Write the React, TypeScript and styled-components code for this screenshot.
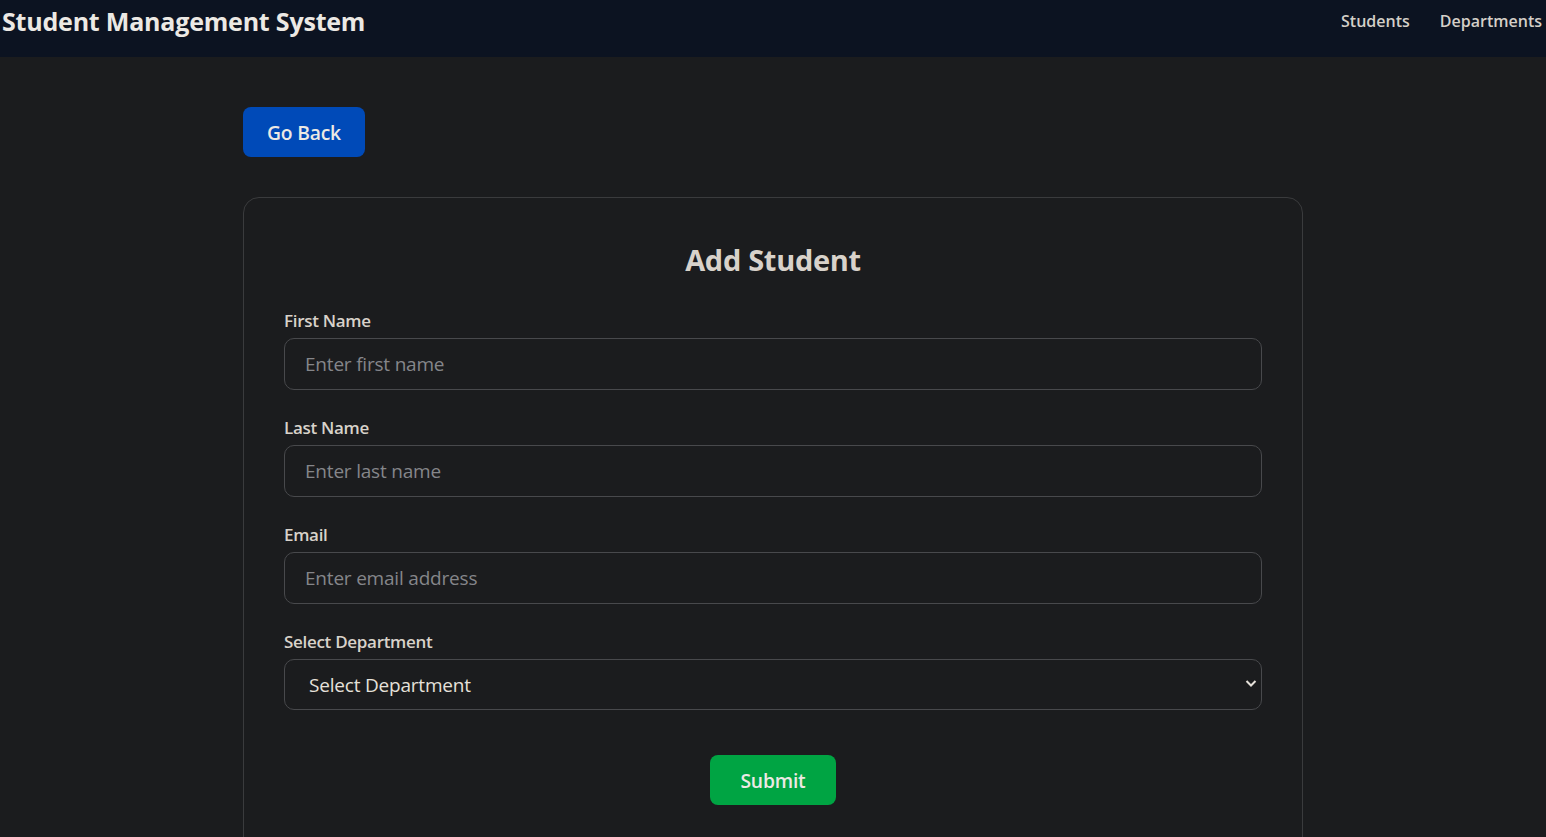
import React from "react";
import styled, { createGlobalStyle } from "styled-components";

const Global = createGlobalStyle`
  * { box-sizing: border-box; }
  html, body { margin: 0; padding: 0; background: #1b1c1e; }
  body { font-family: "Open Sans", "Noto Sans", sans-serif; color: #e6e1da; }
`;

const Header = styled.header`
  height: 57px;
  background: #0c1321;
  display: flex;
  align-items: flex-start;
  justify-content: space-between;
  padding: 3px 4px 0 2px;
`;

const Brand = styled.div`
  font-size: 25px;
  font-weight: 700;
  color: #ece9e4;
  line-height: 36px;
  letter-spacing: -0.2px;
`;

const Nav = styled.nav`
  display: flex;
  gap: 30px;
  padding-top: 3px;
`;

const NavLink = styled.a`
  font-size: 16px;
  font-weight: 600;
  color: #d4cfc8;
  line-height: 30px;
  text-decoration: none;
`;

const Main = styled.main`
  width: 1060px;
  margin: 0 auto;
  padding-top: 50px;
`;

const Button = styled.button<{ $variant: "blue" | "green" }>`
  height: 50px;
  padding: 0 ${(p) => (p.$variant === "blue" ? 24 : 30)}px;
  border: none;
  border-radius: 8px;
  background: ${(p) => (p.$variant === "blue" ? "#004ab8" : "#00a443")};
  color: #ece9e4;
  font-family: inherit;
  font-size: 19.3px;
  font-weight: 600;
  letter-spacing: -0.2px;
  cursor: pointer;
`;

const Card = styled.section`
  margin-top: 40px;
  border: 1px solid #3a3b3d;
  border-radius: 16px;
  padding: 40px 40px 40px;
  height: 680px;
`;

const Title = styled.h2`
  margin: 0 0 28px;
  text-align: center;
  font-size: 29px;
  font-weight: 700;
  line-height: 44px;
  color: #d8d2ca;
  letter-spacing: -0.3px;
`;

const Field = styled.div`
  display: flex;
  flex-direction: column;
  margin-bottom: 27px;
`;

const Label = styled.label`
  font-size: 17px;
  font-weight: 600;
  color: #d8d2ca;
  line-height: 22px;
  margin-bottom: 6px;
  letter-spacing: -0.3px;
`;

const Input = styled.input`
  height: 52px;
  border: 1px solid #48494c;
  border-radius: 10px;
  background: #1b1c1e;
  padding: 0 20px;
  font-family: inherit;
  font-size: 19px;
  color: #e6e1da;
  letter-spacing: -0.2px;
  outline: none;
  &::placeholder { color: #85868a; }
`;

const SelectWrap = styled.div`
  position: relative;
  display: flex;
`;

const Select = styled.select`
  flex: 1;
  height: 51px;
  appearance: none;
  border: 1px solid #48494c;
  border-radius: 10px;
  background: #1b1c1e;
  padding: 0 24px;
  font-family: inherit;
  font-size: 19px;
  color: #e6e1da;
  letter-spacing: -0.2px;
  outline: none;
`;

const Chevron = styled.svg`
  position: absolute;
  right: 5px;
  top: 19px;
  pointer-events: none;
`;

const Actions = styled.div`
  display: flex;
  justify-content: center;
  padding-top: 18px;
`;

export default function App() {
  return (
    <>
      <Global />
      <Header>
        <Brand>Student Management System</Brand>
        <Nav>
          <NavLink href="#">Students</NavLink>
          <NavLink href="#">Departments</NavLink>
        </Nav>
      </Header>
      <Main>
        <Button $variant="blue">Go Back</Button>
        <Card>
          <Title>Add Student</Title>
          <Field>
            <Label>First Name</Label>
            <Input placeholder="Enter first name" />
          </Field>
          <Field>
            <Label>Last Name</Label>
            <Input placeholder="Enter last name" />
          </Field>
          <Field>
            <Label>Email</Label>
            <Input placeholder="Enter email address" />
          </Field>
          <Field>
            <Label>Select Department</Label>
            <SelectWrap>
              <Select defaultValue="">
                <option value="">Select Department</option>
              </Select>
              <Chevron width="12" height="10" viewBox="0 0 12 10">
                <path d="M1.5 3 L6 7.5 L10.5 3" fill="none" stroke="#e6e1da" strokeWidth="2" />
              </Chevron>
            </SelectWrap>
          </Field>
          <Actions>
            <Button $variant="green">Submit</Button>
          </Actions>
        </Card>
      </Main>
    </>
  );
}
